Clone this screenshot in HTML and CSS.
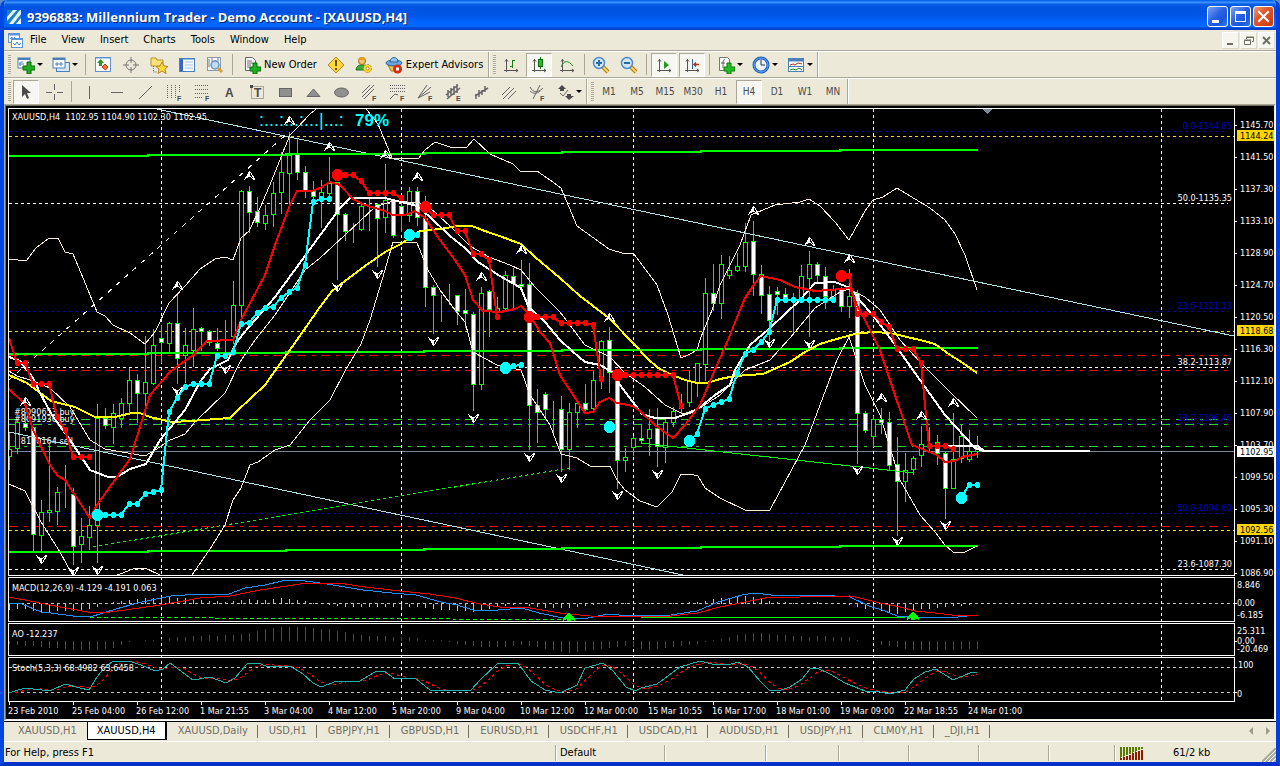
FILE: index.html
```html
<!DOCTYPE html>
<html lang="en">
<head>
    <meta charset="utf-8">
    <title>9396883: Millennium Trader - Demo Account - [XAUUSD,H4]</title>
    <link rel="stylesheet" href="styles.css">
</head>
<body>
<div class="window">
<header class="titlebar">
    <svg class="logo" viewBox="0 0 14 14">
        <rect width="14" height="14" rx="1" fill="#1d7fc0"/>
        <path d="M0 7L6 0H10L0 11zM2 14L13 0H14V4L6 14zM9 14L14 8V14z" fill="#e8f6ff"/>
    </svg>
    <h1>9396883: Millennium Trader - Demo Account - [XAUUSD,H4]</h1>
    <button class="cap" aria-label="Minimize"><svg viewBox="0 0 19 19"><path d="M4 13h7v3H4z" fill="#fff"/></svg></button>
    <button class="cap" aria-label="Maximize"><svg viewBox="0 0 19 19"><path d="M4 4h11v11H4zM5 7v7h9V7z" fill="#fff" fill-rule="evenodd"/></svg></button>
    <button class="cap close" aria-label="Close"><svg viewBox="0 0 19 19"><path d="M5 5l9 9M14 5l-9 9" stroke="#fff" stroke-width="2" stroke-linecap="square"/></svg></button>
</header>

<nav class="menubar">
    <svg class="mdi-icon" viewBox="0 0 15 15">
        <rect x="0.5" y="0.5" width="11" height="9" fill="#fff" stroke="#5b93d6"/>
        <path d="M0 1.5h12" stroke="#5b93d6" stroke-width="2"/>
        <path d="M2 6l2-2 1 2 2-2" fill="none" stroke="#5b93d6"/>
        <rect x="3.5" y="5.5" width="11" height="9" fill="#fff" stroke="#5b93d6"/>
        <path d="M3 6.5h12" stroke="#5b93d6"/>
        <path d="M5 10l2 2 2-3 2 3 2-2" fill="none" stroke="#3c78c8"/>
    </svg>
    <button>File</button>
    <button>View</button>
    <button>Insert</button>
    <button>Charts</button>
    <button>Tools</button>
    <button>Window</button>
    <button>Help</button>
    <span class="spacer"></span>
    <button class="mdi-btn" aria-label="Minimize chart"><svg viewBox="0 0 15 15"><path d="M4 10h6v2H4z" fill="#716f64"/></svg></button>
    <button class="mdi-btn" aria-label="Restore chart"><svg viewBox="0 0 15 15"><path d="M5.5 6V4.5h7v4H11M3.500 7.500h6v4h-6zM3 7h7M5 4h8" fill="none" stroke="#716f64"/></svg></button>
    <button class="mdi-btn" aria-label="Close chart"><svg viewBox="0 0 15 15"><path d="M4 4l7 7M11 4l-7 7" stroke="#716f64" stroke-width="2"/></svg></button>
</nav>

<!-- standard, charts toolbars -->
<div class="toolbars">
<div class="row">
    <div class="bar">
        <span class="grip"></span>
        <button class="drop" aria-label="New chart">
            <svg viewBox="0 0 18 18"><rect x="1" y="2" width="12" height="10" fill="#fff" stroke="#4a80b8"/><path d="M1 3h12" stroke="#4a80b8" stroke-width="2"/><path d="M3 6v4M2 8h5M5 5v2" stroke="#4a80b8"/><path d="M10 6h4v4h4v4h-4v4h-4v-4H6v-4h4z" fill="#1fae1f" stroke="#0a6b0a"/></svg>
            <i></i>
        </button>
        <button class="drop" aria-label="Profiles">
            <svg viewBox="0 0 18 18"><rect x="4.500" y="6.500" width="13" height="9" fill="#d6e8fa" stroke="#4a80b8"/><rect x="1" y="2" width="12" height="10" fill="#fff" stroke="#4a80b8"/><path d="M1 3h12" stroke="#4a80b8" stroke-width="2"/><path d="M3 8h8M5 6v4M9 6v4" stroke="#4a80b8"/></svg>
            <i></i>
        </button>
        <span class="sep"></span>
        <button aria-label="Market Watch"><svg viewBox="0 0 18 18"><rect x="1.500" y="1.500" width="15" height="14" fill="#fff" stroke="#5b93d6"/><path d="M2 2.500h14" stroke="#a8ccf0"/><path d="M6.500 3L10 7H8v3H5V7H3z" fill="#1f9a1f"/><path d="M11.500 14L8 11l2-2 1-1 3 3z" fill="#ee7a3c" stroke="#b03010"/></svg></button>
        <button aria-label="Data Window"><svg viewBox="0 0 18 18"><circle cx="9" cy="9" r="5" fill="none" stroke="#777"/><path d="M9 1v6M9 11v6M1 9h6M11 9h6" stroke="#777"/></svg></button>
        <button aria-label="Navigator"><svg viewBox="0 0 18 18"><path d="M1 2h5l1 2h6v6H1z" fill="#fbe27a" stroke="#b8922a"/><path d="M3.500 10v6h4" stroke="#666" fill="none" stroke-dasharray="1 1"/><path d="M12 6l2 4 4 .5-3 2.500 1 4.500-4-2.500-4 2.500 1-4.500-3-2.500 4-.5z" fill="#ffd83a" stroke="#b8862a"/></svg></button>
        <button aria-label="Terminal"><svg viewBox="0 0 18 18"><rect x="1.500" y="2.500" width="15" height="13" fill="#f4f9ff" stroke="#4a80b8"/><path d="M3.500 3v12" stroke="#3465c8" stroke-width="3"/><path d="M7 6h8M7 9h8M7 12h8" stroke="#a8c4e0"/><path d="M2 3h14" stroke="#4a80b8"/></svg></button>
        <button aria-label="Strategy Tester"><svg viewBox="0 0 18 18"><rect x="1.500" y="1.500" width="13" height="13" fill="#fff" stroke="#8a9aae"/><path d="M3 3v8M6 2v6M9 4v4M12 2v6" stroke="#68788a"/><circle cx="9" cy="9" r="4" fill="#bfdcf6" stroke="#6a93be" stroke-width="1.500"/><path d="M12 12l4 4" stroke="#d8a030" stroke-width="3"/></svg></button>
        <span class="sep"></span>
        <button class="wide"><svg viewBox="0 0 18 18"><path d="M2.500 1.500h7l3 3v10h-10z" fill="#fff" stroke="#666"/><path d="M4 5h5M4 7h6M4 9h4M4 11h3" stroke="#666"/><path d="M10 7h4v4h4v4h-4v3h-4v-3H7v-4h3z" fill="#1fae1f" stroke="#0a6b0a"/></svg>New Order</button>
        <button aria-label="Alerts"><svg viewBox="0 0 18 18"><path d="M9 1l8 8-8 8-8-8z" fill="#ffd83a" stroke="#a8842a"/><path d="M9 4v6M9 12v2" stroke="#6a4a00" stroke-width="2"/></svg></button>
        <button aria-label="MetaEditor"><svg viewBox="0 0 18 18"><path d="M1 14c0-7 12-7 12 0z" fill="#39b039" stroke="#1a751a"/><circle cx="7" cy="5" r="3.500" fill="#f2c46a" stroke="#9a6a1a"/><path d="M3 4c0-4 8-4 8 0z" fill="#e0a020"/><circle cx="12.500" cy="12.500" r="4" fill="#ffd83a" stroke="#b8862a" stroke-dasharray="2 1"/><circle cx="12.500" cy="12.500" r="1.500" fill="#fff" stroke="#b8862a"/></svg></button>
        <button class="wide"><svg viewBox="0 0 18 18"><path d="M3 9h12l-2 6H6z" fill="#f0c050" stroke="#a87a1a"/><ellipse cx="9" cy="7" rx="8" ry="3" fill="#6aa8e2" stroke="#2a64a0"/><path d="M5 6c0-6 8-6 8 0z" fill="#8fc4f2" stroke="#2a64a0"/><circle cx="12.500" cy="13" r="4.500" fill="#d82a10"/><rect x="11" y="11.500" width="3" height="3" fill="#fff"/></svg>Expert Advisors</button>
    </div>
    <div class="bar">
        <span class="grip"></span>
        <button aria-label="Bar chart"><svg viewBox="0 0 18 18"><path d="M4.500 3v13M2 14.500h14M3 5.500l1.500-2L6 5.500M14 13l2 1.500-2 1.500" fill="none" stroke="#555"/><path d="M10.500 4v8M8 10.500h2.500M10.500 4.500H13" stroke="#1a801a" fill="none"/></svg></button>
        <button class="on" aria-label="Candlesticks"><svg viewBox="0 0 18 18"><path d="M4.500 3v13M2 14.500h14M3 5.500l1.500-2L6 5.500M14 13l2 1.500-2 1.500" fill="none" stroke="#555"/><path d="M10.500 1v12" stroke="#0a6b0a"/><rect x="8.500" y="3.500" width="4" height="7" fill="#1fc01f" stroke="#0a6b0a"/></svg></button>
        <button aria-label="Line chart"><svg viewBox="0 0 18 18"><path d="M4.500 3v13M2 14.500h14M3 5.500l1.500-2L6 5.500M14 13l2 1.500-2 1.500" fill="none" stroke="#555"/><path d="M3 11C6 4 10 4 15 10" stroke="#1a901a" fill="none"/></svg></button>
        <span class="sep slim"></span>
        <button aria-label="Zoom in"><svg viewBox="0 0 18 18"><path d="M11 11l5 5" stroke="#a87a1a" stroke-width="4"/><path d="M11 11l5 5" stroke="#f6d860" stroke-width="2"/><circle cx="7" cy="7" r="5.500" fill="#cfe6fa" stroke="#4f8cc8" stroke-width="1.500"/><path d="M4 7h6M7 4v6" stroke="#2a6aa8" stroke-width="2"/></svg></button>
        <button aria-label="Zoom out"><svg viewBox="0 0 18 18"><path d="M11 11l5 5" stroke="#a87a1a" stroke-width="4"/><path d="M11 11l5 5" stroke="#f6d860" stroke-width="2"/><circle cx="7" cy="7" r="5.500" fill="#cfe6fa" stroke="#4f8cc8" stroke-width="1.500"/><path d="M4 7h6" stroke="#2a6aa8" stroke-width="2"/></svg></button>
        <span class="sep"></span>
        <button class="on" aria-label="Auto scroll"><svg viewBox="0 0 18 18"><path d="M4.500 3v13M2 14.500h14M3 5.500l1.500-2L6 5.500M14 13l2 1.500-2 1.500" fill="none" stroke="#555"/><path d="M9 5l5 4-5 4z" fill="#1f9a1f"/></svg></button>
        <button class="on" aria-label="Chart shift"><svg viewBox="0 0 18 18"><path d="M4.500 3v13M2 14.500h14M3 5.500l1.500-2L6 5.500M14 13l2 1.500-2 1.500" fill="none" stroke="#555"/><path d="M9.500 3v10" stroke="#2a64a0"/><path d="M16 8.500h-5M13 6.500l-2 2 2 2" stroke="#b03010" fill="none" stroke-width="1.500"/></svg></button>
        <span class="sep slim"></span>
        <button class="drop" aria-label="Indicators">
            <svg viewBox="0 0 18 18"><path d="M2.500 1.500h8l2 2v11h-10z" fill="#fff" stroke="#777"/><path d="M8 4c-2-1-2 1-2 8M4 7h4" stroke="#555" fill="none"/><path d="M10 7h4v4h4v4h-4v3h-4v-3H7v-4h3z" fill="#1fc01f" stroke="#0a7b0a"/></svg>
            <i></i>
        </button>
        <button class="drop" aria-label="Periods">
            <svg viewBox="0 0 18 18"><circle cx="9" cy="9" r="7" fill="#e8f3ff" stroke="#1c5cc0" stroke-width="3"/><circle cx="9" cy="9" r="7" fill="none" stroke="#6aaaf0"/><path d="M9 4v5h4" stroke="#333" fill="none"/></svg>
            <i></i>
        </button>
        <button class="drop" aria-label="Templates">
            <svg viewBox="0 0 18 18"><rect x="1.500" y="2.500" width="15" height="13" fill="#fff" stroke="#4a80b8"/><path d="M1 4h16" stroke="#4a80b8" stroke-width="3"/><path d="M3 9l3-1 2 1 3-2 4 1" stroke="#b03010" fill="none"/><path d="M2 10.500h14" stroke="#4a80b8"/><path d="M3 14l3-1 3 1 3-2 3 2" stroke="#1a801a" fill="none"/></svg>
            <i></i>
        </button>
    </div>
</div>
<!-- line studies, timeframes -->
<div class="row">
    <div class="bar gray">
        <span class="grip"></span>
        <button class="on" aria-label="Cursor"><svg viewBox="0 0 18 18"><path d="M5 2v12l3-3 2 5 2-1-2-5h4z" fill="#4a4a4a" stroke="none"/></svg></button>
        <button aria-label="Crosshair"><svg viewBox="0 0 18 18"><path d="M9.500 1v6M9.500 11v6M1 9.500h6M12 9.500h6"/></svg></button>
        <span class="sep"></span>
        <button aria-label="Vertical line"><svg viewBox="0 0 18 18"><path d="M9.500 3v13"/></svg></button>
        <button aria-label="Horizontal line"><svg viewBox="0 0 18 18"><path d="M3 9.500h12"/></svg></button>
        <button aria-label="Trendline"><svg viewBox="0 0 18 18"><path d="M3 16L16 3"/></svg></button>
        <button aria-label="Cycle lines"><svg viewBox="0 0 18 18"><path d="M3.500 2v13M7.500 2v13M11.500 2v13M15.500 2v8" stroke-dasharray="1 1"/><text x="13" y="18">F</text></svg></button>
        <button aria-label="Fibonacci retracement"><svg viewBox="0 0 18 18"><path d="M3 2.500h13M3 6.500h13M3 10.500h13M3 14.500h8" stroke-dasharray="1 1"/><text x="13" y="18">F</text></svg></button>
        <button aria-label="Text"><svg viewBox="0 0 18 18"><text class="glyph" x="5" y="14">A</text></svg></button>
        <button aria-label="Text label"><svg viewBox="0 0 18 18"><rect x="3.500" y="3.500" width="12" height="12" fill="none" stroke-dasharray="1 1"/><path d="M2 2h3v3H2z" fill="#4a4a4a" stroke="none"/><text class="glyph" x="6" y="14">T</text></svg></button>
        <button aria-label="Rectangle"><svg viewBox="0 0 18 18"><rect x="3.500" y="5.500" width="12" height="8" fill="#909090"/></svg></button>
        <button aria-label="Triangle"><svg viewBox="0 0 18 18"><path d="M3 13.500L9.500 6 16 13.500z" fill="#909090"/></svg></button>
        <button aria-label="Ellipse"><svg viewBox="0 0 18 18"><ellipse cx="9.500" cy="9.500" rx="7" ry="4.500" fill="#909090"/></svg></button>
        <button aria-label="Fibonacci channel"><svg viewBox="0 0 18 18"><path d="M2 10L10 2M2 14L14 2M4 16L14 6"/><text x="12" y="18">F</text></svg></button>
        <button aria-label="Fibonacci expansion"><svg viewBox="0 0 18 18"><path d="M2 2.500h15M2 5.500h15M2 8.500h15" stroke-dasharray="1 1"/><path d="M2 16l5-5 3 1"/><text x="12" y="18">F</text></svg></button>
        <button aria-label="Fibonacci fan"><svg viewBox="0 0 18 18"><path d="M2 15L11 2M2 15L15 4M2 15L14 9"/><text x="12" y="18">F</text></svg></button>
        <button aria-label="Equidistant channel"><svg viewBox="0 0 18 18"><path d="M2 12L14 2M3 16L16 5M4 7v7M7 5v8M10 3v9M13 1v9" stroke-width="1.500"/><text x="12" y="18">E</text></svg></button>
        <button aria-label="Standard deviation channel"><svg viewBox="0 0 18 18"><path d="M3 13L16 5M4 11v5M7 7v7M10 7v5M13 3v6" stroke-width="1.500"/></svg></button>
        <button aria-label="Parallel lines"><svg viewBox="0 0 18 18"><path d="M2 12L10 4M3 16L14 5M8 16L16 8"/></svg></button>
        <button aria-label="Fibonacci arcs"><svg viewBox="0 0 18 18"><path d="M5 16L12 2M2 4c3 6 8 6 13 1M2 8c3 3 7 3 10 0"/><text x="12" y="18">F</text></svg></button>
        <button class="drop" aria-label="Arrows">
            <svg viewBox="0 0 18 18"><path d="M6 2l4 4H8v2H4V6H2zM13 17l-4-4h2v-2h4v2h3z" fill="#4a4a4a" stroke="none"/><path d="M4 10l3 3 5-6"/></svg>
            <i></i>
        </button>
    </div>
    <div class="bar gray frames">
        <span class="grip"></span>
        <button>M1</button>
        <button>M5</button>
        <button>M15</button>
        <button>M30</button>
        <button>H1</button>
        <button class="on">H4</button>
        <button>D1</button>
        <button>W1</button>
        <button>MN</button>
    </div>
</div>
</div>

<main class="mdi">
<svg id="chart" class="chart" viewBox="6 106 1268 613" role="img" aria-label="XAUUSD, H4 chart">
    <defs>
        <clipPath id="mainPane"><rect x="9" y="109" width="1225" height="466"/></clipPath>
        <g id="fractal">
            <path d="M0.5 -5V0L6 4L1.500 -4" fill="none" stroke="#fff"/>
            <path d="M0 -5L1 -5V0L-5 4L-2 -1Z" fill="#fff"/>
        </g>
        <path id="signal" d="M0 -5L6 2V4L2 2V4H-2V2L-6 4V2Z" fill="#0f0"/>
    </defs>

    <g id="levels" fill="none"></g>
    <g id="orders" class="small">
        <text x="14" y="415">#8090653 buy</text>
        <text x="14" y="422">#8091936 buy</text>
        <text x="14" y="444">#8130164 sell</text>
    </g>
    <g id="plot" fill="none" clip-path="url(#mainPane)"></g>

    <!-- sub-windows: MACD, AO, Stochastic -->
    <g id="macd" fill="none"></g>
    <g id="ao" fill="none"></g>
    <g id="stoch" fill="none"></g>

    <g fill="none" stroke="#fff">
        <rect x="8.500" y="108.500" width="1226" height="467"/>
        <rect x="8.500" y="577.500" width="1226" height="44"/>
        <rect x="8.500" y="623.500" width="1226" height="32"/>
        <rect x="8.500" y="657.500" width="1226" height="44"/>
    </g>
    <g id="ticks" stroke="#fff"></g>
    <path d="M983 109h9l-4.500 5z" fill="#789"/>

    <g class="small">
        <text x="12" y="120" xml:space="preserve">XAUUSD,H4  1102.95 1104.90 1102.30 1102.95</text>
        <text x="12" y="591">MACD(12,26,9) -4.129 -4.191 0.063</text>
        <text x="12" y="637">AO -12.237</text>
        <text x="12" y="671">Stoch(5,3,3) 68.4982 63.6458</text>
    </g>
    <text class="meter" x="259" y="126">:...:...:...|...:</text>
    <text class="percent" x="355" y="126">79%</text>

    <g class="small fib">
        <text class="blue" x="1232" y="129">0.0-1144.85</text>
        <text x="1232" y="201">50.0-1135.35</text>
        <text class="blue" x="1232" y="309">23.6-1121.13</text>
        <text x="1232" y="365">38.2-1113.87</text>
        <text class="blue" x="1232" y="421">38.2-1106.46</text>
        <text class="blue" x="1232" y="511">50.0-1094.60</text>
        <text x="1232" y="567">23.6-1087.30</text>
    </g>

    <g class="small">
        <text x="1240" y="128">1145.70</text>
        <text x="1240" y="160">1141.50</text>
        <text x="1240" y="192">1137.30</text>
        <text x="1240" y="224">1133.10</text>
        <text x="1240" y="256">1128.90</text>
        <text x="1240" y="288">1124.70</text>
        <text x="1240" y="320">1120.50</text>
        <text x="1240" y="352">1116.30</text>
        <text x="1240" y="384">1112.10</text>
        <text x="1240" y="416">1107.90</text>
        <text x="1240" y="448">1103.70</text>
        <text x="1240" y="480">1099.50</text>
        <text x="1240" y="512">1095.30</text>
        <text x="1240" y="544">1091.10</text>
        <text x="1240" y="576">1086.90</text>
        <text x="1237" y="588">8.846</text>
        <text x="1237" y="606">0.00</text>
        <text x="1237" y="618">-6.185</text>
        <text x="1237" y="634">25.311</text>
        <text x="1237" y="644">0.00</text>
        <text x="1237" y="652">-20.469</text>
        <text x="1238" y="668">100</text>
        <text x="1237" y="697">0</text>
    </g>
    <g fill="#ffd700">
        <rect x="1237" y="130" width="37" height="11"/>
        <rect x="1237" y="325" width="37" height="11"/>
        <rect x="1237" y="524" width="37" height="11"/>
        <rect x="1237" y="446" width="37" height="11" fill="#fff"/>
    </g>
    <g class="small dark">
        <text x="1240" y="139">1144.24</text>
        <text x="1240" y="334">1118.68</text>
        <text x="1240" y="455">1102.95</text>
        <text x="1240" y="533">1092.56</text>
    </g>

    <g class="small">
        <text x="8" y="714">23 Feb 2010</text>
        <text x="72" y="714">25 Feb 04:00</text>
        <text x="136" y="714">26 Feb 12:00</text>
        <text x="200" y="714">1 Mar 21:55</text>
        <text x="264" y="714">3 Mar 04:00</text>
        <text x="328" y="714">4 Mar 12:00</text>
        <text x="392" y="714">5 Mar 20:00</text>
        <text x="456" y="714">9 Mar 04:00</text>
        <text x="520" y="714">10 Mar 12:00</text>
        <text x="584" y="714">12 Mar 00:00</text>
        <text x="648" y="714">15 Mar 10:55</text>
        <text x="712" y="714">16 Mar 17:00</text>
        <text x="776" y="714">18 Mar 01:00</text>
        <text x="840" y="714">19 Mar 09:00</text>
        <text x="904" y="714">22 Mar 18:55</text>
        <text x="968" y="714">24 Mar 01:00</text>
    </g>
</svg>
</main>

<nav class="tabs">
    <a href="#">XAUUSD,H1</a>
    <a href="#" class="active">XAUUSD,H4</a>
    <a href="#">XAUUSD,Daily</a>
    <a href="#">USD,H1</a>
    <a href="#">GBPJPY,H1</a>
    <a href="#">GBPUSD,H1</a>
    <a href="#">EURUSD,H1</a>
    <a href="#">USDCHF,H1</a>
    <a href="#">USDCAD,H1</a>
    <a href="#">AUDUSD,H1</a>
    <a href="#">USDJPY,H1</a>
    <a href="#">CLM0Y,H1</a>
    <a href="#">_DJI,H1</a>
    <span class="spacer"></span>
    <button aria-label="Scroll left"><svg viewBox="0 0 4 8"><path d="M4 0v8L0 4z" fill="#9c9a8c"/></svg></button>
    <button aria-label="Scroll right"><svg viewBox="0 0 4 8"><path d="M0 0v8l4-4z" fill="#9c9a8c"/></svg></button>
</nav>

<footer class="status">
    <span class="help">For Help, press F1</span>
    <span class="w110">Default</span>
    <span class="w100"></span>
    <span class="w72"></span>
    <span class="w70"></span>
    <span class="w70"></span>
    <span class="w70"></span>
    <span class="w66"></span>
    <span class="conn">
        <svg viewBox="0 0 24 13">
            <path d="M1 0v13M4 0v13M7 0v13M10 0v13M13 0v13M16 0v13M19 0v13M22 0v13" stroke="#5a7a00" stroke-width="2"/>
            <path d="M0 11L24 1V13H0z" fill="#ece9d8"/>
            <path d="M1 11v2M4 10v3M7 9v4M10 8v5M13 6v7M16 5v8M19 4v9M22 3v10" stroke="#8e1a00" stroke-width="2"/>
        </svg>
        61/2 kb
    </span>
    <svg class="resize" viewBox="0 0 14 14"><path d="M0 14L14 0M4 14L14 4M8 14L14 8M12 14l2-2" stroke="#aca899" stroke-width="2"/><path d="M2 14L14 2M6 14l8-8M10 14l4-4" stroke="#fff"/></svg>
</footer>
</div>
<script src="chart.js"></script>
</body>
</html>
```

FILE: styles.css
```css
* {
    box-sizing: border-box;
}
body {
    margin: 0;
    background: #5b8fd0;
    font: 11px/14px "DejaVu Sans Condensed", "Liberation Sans", sans-serif;
    color: #000;
}
button {
    font: inherit;
    color: inherit;
    background: none;
    border: 0;
    padding: 0;
    margin: 0;
}
.window {
    display: flex;
    flex-direction: column;
    height: 100vh;
    background: #ece9d8;
    border: solid #0831d9;
    border-width: 0 4px 4px;
    border-color: #0046e0 #0040d8 #0031c8 #0046e0;
    border-radius: 7px 7px 0 0;
    overflow: hidden;
}
.spacer {
    flex: 1;
}

/* title bar */
.titlebar {
    display: flex;
    align-items: center;
    height: 30px;
    flex: none;
    margin: 0 -4px;
    padding: 3px 6px 0 7px;
    gap: 2px;
    background: linear-gradient(#0058e6 0, #3a93ff 8%, #0a5fe8 14%, #0053e1 25%, #0055e5 50%, #0066ff 75%, #0066ff 88%, #0048d0 94%, #003dc8 100%);
}
.logo {
    width: 14px;
    height: 14px;
}
.titlebar h1 {
    flex: 1;
    margin: 0;
    padding-left: 4px;
    font: bold 13px/18px "Open Sans", sans-serif;
    color: #fff;
    text-shadow: 1px 1px #0a246a;
    white-space: nowrap;
}
.cap {
    width: 21px;
    height: 21px;
    border: 1px solid #fff;
    border-radius: 3px;
    background: linear-gradient(135deg, #7ba4f4, #2a62e4 45%, #1a55dc 70%, #2a7af0);
}
.cap svg {
    display: block;
}
.cap.close {
    background: linear-gradient(135deg, #e8a078, #e0562a 40%, #d8481a 70%, #c03a10);
}

/* menu */
.menubar {
    display: flex;
    align-items: center;
    flex: none;
    height: 21px;
    padding-left: 4px;
    border-bottom: 1px solid #aca899;
}
.mdi-icon {
    width: 15px;
    height: 15px;
    margin-right: -1px;
}
.menubar button {
    padding: 0 7px 0 8px;
}
.menubar .mdi-btn {
    width: 17px;
    height: 17px;
    padding: 0;
    margin-right: 1px;
    background: #f6f5ee;
    border: 1px solid;
    border-color: #fff #dcd8c8 #dcd8c8 #fff;
}
.mdi-btn svg {
    display: block;
}

/* toolbars */
.toolbars {
    flex: none;
}
.row {
    display: flex;
    height: 26px;
    border-top: 1px solid #fff;
}
.row:first-child {
    height: 27px;
    border-bottom: 1px solid #aca899;
}
.bar {
    display: flex;
    align-items: center;
    padding-left: 4px;
    border-right: 1px solid #aca899;
    box-shadow: 1px 0 #fff;
}
.grip {
    width: 3px;
    height: 20px;
    margin-right: 1px;
    background: repeating-linear-gradient(#aca899 0, #aca899 1px, #f8f7f0 1px, #ece9d8 2px);
}
.sep {
    width: 7px;
    height: 21px;
    background: linear-gradient(#aca899, #aca899) center / 1px 100% no-repeat;
}
.sep.slim {
    width: 6px;
}
.bar button {
    display: flex;
    align-items: center;
    justify-content: center;
    width: 28px;
    height: 24px;
}
.bar svg {
    width: 18px;
    height: 18px;
    flex: none;
}
.bar .on {
    width: 26px;
    margin: 0 1px;
    border: 1px solid;
    border-color: #aca899 #fff #fff #aca899;
    background: #f7f6f0;
}
.bar .drop {
    width: 35px;
    justify-content: flex-start;
    padding-left: 5px;
    gap: 2px;
}
.drop i {
    border: 3px solid transparent;
    border-top-color: #000;
    border-bottom: 0;
}
.bar .wide {
    width: auto;
    padding: 0 5px 0 7px;
    gap: 3px;
    white-space: nowrap;
}
.gray svg {
    fill: none;
    stroke: #666;
}
.gray text {
    font: bold 7px "Liberation Sans", sans-serif;
    fill: #4a4a4a;
    stroke: none;
}
.gray text.glyph {
    font-size: 12px;
}
.frames {
    color: #4a4a4a;
    font-size: 10px;
}

/* chart window */
.mdi {
    flex: 1;
    min-height: 0;
    border: 1px solid;
    border-color: #aca899 #fff #fff #aca899;
}
.chart {
    display: block;
    width: 100%;
    height: 100%;
    background: #000;
    border: 1px solid;
    border-color: #716f64 #f1efe2 #f1efe2 #716f64;
    shape-rendering: crispEdges;
}
.small text {
    font: 9px "DejaVu Sans Condensed", "Liberation Sans", sans-serif;
    fill: #fff;
}
.fib text {
    text-anchor: end;
}
.fib .blue {
    fill: #0000cd;
}
.dark text {
    fill: #000;
}
.meter {
    font: 18px "Liberation Sans", sans-serif;
    fill: #0ff;
}
.percent {
    font: bold 17px "Liberation Sans", sans-serif;
    fill: #0ff;
}

/* chart tabs */
.tabs {
    display: flex;
    align-items: flex-start;
    flex: none;
    height: 20px;
    padding-left: 4px;
    border-top: 1px solid #000;
}
.tabs a {
    height: 18px;
    line-height: 17px;
    padding: 0 10px 0 11px;
    color: #716f64;
    text-decoration: none;
    white-space: nowrap;
    background: linear-gradient(#716f64, #716f64) right 3px / 1px 13px no-repeat;
}
.tabs a:first-child {
    background: none;
    padding-left: 10px;
}
.tabs a.active {
    color: #000;
    background: #fff;
    border: solid #000;
    border-width: 0 2px 1px 1px;
    padding: 0 9px;
}
.tabs button {
    width: 17px;
    height: 18px;
}
.tabs button svg {
    display: block;
    width: 4px;
    height: 8px;
    margin: 0 auto;
}

/* status bar */
.status {
    display: flex;
    flex: none;
    height: 21px;
    border-top: 1px solid #fff;
}
.status span {
    margin: 3px 0 1px;
    padding-left: 4px;
    line-height: 16px;
    border-left: 1px solid #aca899;
    box-shadow: inset 1px 0 #fff;
}
.status .help {
    flex: 1;
    padding-left: 1px;
    border: 0;
    box-shadow: none;
}
.w110 { width: 109px; }
.w100 { width: 101px; }
.w72 { width: 73px; }
.w70 { width: 70px; }
.w66 { width: 66px; }
.status .conn {
    display: flex;
    align-items: center;
    gap: 29px;
    width: 148px;
    padding-left: 5px;
    white-space: nowrap;
}
.conn svg {
    width: 24px;
    height: 13px;
    shape-rendering: crispEdges;
}
.resize {
    width: 14px;
    height: 14px;
    align-self: flex-end;
}
```

FILE: chart.js
```js
(function(){
    var NS = "http://www.w3.org/2000/svg",
        STEP = 8, X0 = 9;

    function add(parent, name, attrs) {
        var el = document.createElementNS(NS, name);
        for (var a in attrs) el.setAttribute(a, attrs[a]);
        document.getElementById(parent).appendChild(el);
        return el;
    }
    function line(parent, points, color, width, dash) {
        add(parent, "polyline", {
            points: points, stroke: color,
            "stroke-width": width || 1,
            "stroke-dasharray": dash || "none"
        });
    }
    function hline(y, color, dash, end) {
        add("levels", "path", {
            d: "M9 " + (y + 0.5) + "H" + (end || 1228),
            stroke: color, "stroke-dasharray": dash || "none"
        });
    }
    // value of a polyline at every bar
    function sample(points) {
        var p = points.split(" ").map(function(s) { return s.split(",").map(Number); }),
            out = [], j = 0;
        for (var x = X0; x <= 977; x += STEP) {
            while (j < p.length - 2 && p[j+1][0] < x) j++;
            var t = (x - p[j][0]) / (p[j+1][0] - p[j][0]);
            out.push(p[j][1] + t * (p[j+1][1] - p[j][1]));
        }
        return out;
    }

    // horizontal levels and period separators
    [419, 424, 446].forEach(function(y) { hline(y, "#32cd32", "9 6 3 6"); });
    [355, 370, 526].forEach(function(y) { hline(y, "#f00", "9 6 3 6"); });
    [131, 311, 423, 513].forEach(function(y) { hline(y, "#0000cd", "3 3"); });
    [136, 331, 530].forEach(function(y) { hline(y, "#ffd700", "3 3", 1234); });
    [203, 367, 569].forEach(function(y) { hline(y, "#fff", "3 3"); });
    hline(451, "#778899", "", 1234);
    [603, 667, 692].forEach(function(y) { hline(y, "#c0c0c0", "3 3", 1234); });
    [161, 401, 633, 873, 1161].forEach(function(x) {
        add("levels", "path", { d: "M" + (x + 0.5) + " 109V700", stroke: "#fff", "stroke-dasharray": "3 3" });
    });

    // bars: high, open, close, low
    var bars = [
        [433,456,449,469],[420,448,422,453],[412,423,427,430],[427,427,534,551],[500,535,512,551],
        [442,512,510,521],[487,511,492,524],[465,493,493,507],[488,494,546,564],[518,544,536,562],
        [506,537,525,549],[404,525,418,562],[408,418,425,428],[404,427,413,443],[398,418,403,427],
        [368,403,380,413],[374,380,393,422],[336,393,382,413],[329,383,345,384],[325,338,342,362],
        [322,343,323,352],[294,323,358,383],[328,355,345,382],[308,350,329,366],[327,328,331,350],
        [330,331,342,345],[328,343,348,350],[320,347,347,353],[281,336,305,343],[190,305,191,317],
        [186,191,212,232],[197,211,222,226],[205,223,215,229],[182,214,193,226],[152,192,172,213],
        [132,173,155,206],[139,154,172,179],[166,172,190,197],[181,191,196,203],[180,197,192,227],
        [157,193,183,200],[182,182,214,279],[213,214,231,240],[223,229,229,242],[204,229,206,230],
        [198,204,204,230],[203,204,218,266],[164,217,200,232],[199,200,235,237],[198,206,215,231],
        [187,215,191,221],[187,191,217,225],[196,218,287,306],[285,287,295,333],[295,296,296,321],
        [284,296,296,304],[295,295,311,324],[289,310,313,327],[312,314,384,410],[287,384,293,389],
        [290,291,309,336],[297,311,308,312],[271,308,275,310],[268,276,283,307],[260,284,286,289],
        [263,284,405,449],[389,405,412,442],[392,394,409,419],[401,409,409,434],[396,409,449,471],
        [403,449,412,469],[401,412,403,427],[384,403,409,410],[371,408,380,409],[340,376,341,388],
        [327,340,372,392],[370,372,460,488],[448,460,457,471],[436,447,438,455],[425,438,440,443],
        [409,438,429,455],[408,428,446,466],[419,447,422,462],[407,422,411,426],[394,408,405,412],
        [371,402,381,406],[363,382,363,396],[278,364,293,380],[264,293,303,310],[255,303,264,318],
        [256,275,270,278],[253,270,266,271],[223,266,242,271],[221,241,274,295],[265,274,295,313],
        [286,294,320,340],[287,291,294,314],[288,294,297,300],[293,299,299,334],[265,297,276,301],
        [251,278,264,336],[262,264,275,281],[267,276,296,308],[285,297,289,300],[287,289,306,311],
        [269,306,296,317],[290,293,413,463],[411,413,430,432],[416,436,419,446],[408,419,422,433],
        [412,422,465,469],[437,464,481,535],[453,481,470,501],[456,469,458,474],[426,455,444,466],
        [427,446,446,450],[435,442,453,464],[452,453,488,518],[413,488,459,488],[424,458,436,462],
        [430,459,451,461],[436,451,448,457]
    ];
    bars.forEach(function(b, i) {
        var x = X0 + i * STEP,
            top = Math.min(b[1], b[2]), h = Math.abs(b[1] - b[2]);
        add("plot", "rect", { x: x, y: b[0], width: 1, height: b[3] - b[0] + 1, fill: "#0f0" });
        add("plot", "rect", {
            x: x - 1.5, y: top + 0.5, width: 4, height: h,
            fill: b[2] > b[1] ? "#fff" : "#000", stroke: "#0f0"
        });
    });

    // trend lines
    line("plot", "152,108 1234,336", "#b0e0e6");
    line("plot", "9,432 683,575", "#b0e0e6");
    line("plot", "9,380 289,132", "#fff", 1, "5 6");
    line("plot", "93,547 569,468", "#0f0", 1, "3 3");
    line("plot", "641,443 905,472 913,473", "#0f0");
    [156, 354, 552].forEach(function(y) {
        var d = "M9 " + y;
        [148, 286, 424, 562, 701, 840, 978].forEach(function(x, i) {
            d += "H" + x + (i < 6 ? "V" + (y - i - 1) : "");
        });
        add("plot", "path", { d: d, stroke: "#0f0", "stroke-width": 2 });
    });

    // Bollinger bands
    line("plot", "9,259 26,261 36,248 48,239 58,238 65,252 73,254 81,273 97,312 105,316 113,325 130,333 145,344 155,332 169,303 185,286 200,269 215,259 225,257 233,260 241,238 249,231 260,208 272,180 283,152 290,135 297,128 310,114 320,106 363,106 367,110 378,124 392,158 418,159 425,150 435,142 450,147 466,148 474,139 490,154 513,164 521,172 537,171 550,180 561,188 577,226 609,249 625,254 633,253 640,262 657,285 668,315 681,358 690,354 697,350 701,337 712,310 720,285 740,245 751,215 775,205 800,202 809,199 820,206 835,222 849,240 865,211 873,200 883,197 897,188 910,196 930,208 945,220 955,234 965,255 977,290", "#faebd7");
    line("plot", "9,371 17,376 30,380 50,388 70,407 90,440 105,449 145,456 160,447 168,441 185,434 195,422 225,393 240,362 255,340 275,315 305,270 320,258 345,235 375,207 393,201 420,203 430,208 450,226 470,246 489,257 510,265 521,270 535,287 560,312 585,345 610,357 625,373 645,387 665,405 683,414 700,408 720,395 745,370 770,360 790,338 815,308 840,292 849,289 865,297 880,310 900,340 920,362 950,392 977,418", "#faebd7");
    line("plot", "9,484 25,491 41,522 60,552 73,576 115,576 133,569 145,568 160,575 192,575 210,549 225,525 233,500 241,488 250,465 258,462 275,450 290,445 310,420 330,400 345,371 361,344 370,320 385,270 393,242 417,243 428,270 440,290 455,310 465,322 473,352 497,365 521,370 530,395 550,425 561,454 577,458 590,466 610,466 617,480 625,490 640,501 657,507 672,492 681,474 690,474 698,476 705,488 720,498 745,510 760,511 770,510 785,482 805,445 820,405 837,360 849,337 855,355 865,385 880,415 900,480 920,515 935,532 945,545 953,552 963,553 977,546", "#faebd7");

    // moving averages
    line("plot", "9,375 27,383 51,401 63,404 75,407 95,417 115,417 132,413 140,413 150,417 172,422 190,421 230,418 236,412 265,385 297,340 320,307 332,291 345,281 365,266 385,252 401,244 420,231 440,229 458,226 472,226 485,231 505,238 521,244 535,257 560,278 580,296 609,318 633,343 647,358 658,368 670,374 685,380 697,383 707,383 720,379 735,376 763,374 790,362 805,352 820,344 833,340 855,334 873,332 890,333 920,340 935,344 950,355 960,361 977,373", "#ff0", 2);
    line("plot", "9,357 20,361 33,378 41,395 52,415 70,440 90,470 108,477 117,477 130,469 146,464 160,440 185,410 200,382 210,369 228,360 235,345 243,334 275,297 313,245 340,208 350,198 385,198 401,202 417,206 430,217 450,236 465,248 478,262 500,276 521,288 528,306 545,322 560,340 572,351 585,362 600,365 612,372 620,385 642,414 655,418 675,418 695,411 715,395 730,385 735,370 750,345 770,328 800,300 815,283 835,282 850,288 857,297 875,318 893,342 920,380 945,415 975,448 984,451 1090,451", "#fff", 2);
    line("plot", "929,446 978,446 984,451", "#fff", 2);
    line("plot", "9,389 25,404 33,430 50,465 58,476 65,480 90,518 97,505 130,459 150,395 170,372 193,355 207,341 233,340 241,320 265,275 275,245 290,205 297,191 312,191 320,188 330,182 340,185 353,199 365,205 385,211 393,215 405,215 415,211 425,218 440,240 455,260 465,275 473,300 483,311 500,312 515,309 521,306 530,315 540,332 550,343 560,375 585,413 593,412 600,402 609,398 617,403 633,406 640,411 655,425 673,438 685,425 700,405 717,365 728,340 740,310 745,298 755,283 761,276 780,280 795,287 815,291 830,290 850,288 857,305 865,320 880,350 895,395 912,445 937,455 945,462 955,461 962,457 977,454", "#f00", 2);

    // trailing stops: first x, then a y for each bar; the big dot marks the switch
    function stops(x, ys, color, lead) {
        var pts = ys.map(function(y, i) { return (x + i * STEP) + "," + y; });
        line("plot", (lead ? lead + " " : "") + pts.join(" "), color, 2);
        ys.forEach(function(y, i) {
            add("plot", "circle", { cx: x + i * STEP + 0.5, cy: y, r: (i || lead) ? 3 : 6, fill: color });
        });
    }
    stops(17, [363,363,384,384,384,417,430,457,457,457], "#f00", "9,338");
    stops(337, [175,175,175,181,193,193,193,193,198], "#f00");
    stops(425, [207,215,215,215,231,231,254,254,260,317], "#f00");
    stops(529, [317,317,317,317,323,323,323,323,325,379], "#f00");
    stops(617, [375,375,375,375,375,375,375,375,406], "#f00");
    stops(841, [276,276,314,314,314,322,327,349,349,349,363,446,446,446,449], "#f00");
    stops(97, [515,515,515,515,504,504,494,492,490,412,398,387,384,384,384,356,356,352,324,323,313,308,307,298,292,288,265,202,199,199], "#0ff");
    stops(409, [235,235], "#0ff");
    stops(505, [368,366,365], "#0ff");
    stops(609, [427], "#0ff");
    stops(689, [441,434,409,405,402,399,373,354,350,342,332,300,300,300,300,300,300,300,300], "#0ff");
    stops(961, [498,485,485], "#0ff");

    // fractals
    [[25,402],[177,286],[249,176],[289,121],[329,147],[385,155],[417,177],[481,277],[521,250],
     [609,318],[753,211],[809,242],[849,259],[881,398],[921,416],[953,403]].forEach(function(p) {
        add("plot", "use", { href: "#fractal", transform: "translate(" + p + ")" });
    });
    [[41,559],[73,571],[97,570],[177,391],[225,369],[337,287],[377,274],[433,341],[473,418],[529,457],
     [561,478],[617,495],[657,474],[769,343],[809,344],[857,470],[897,541],[945,525]].forEach(function(p) {
        add("plot", "use", { href: "#fractal", transform: "translate(" + p + ") scale(1 -1)" });
    });

    // MACD
    var macd = "9,603 22,604 41,612 51,613 73,616 90,617 116,609 137,603 171,596 200,594 229,594 245,588 265,585 282,581 298,580 327,584 363,590 392,593 416,595 441,602 457,605 473,610 498,610 522,608 539,613 563,618 588,618 608,614 629,616 671,615 697,611 718,602 742,595 754,593 771,595 795,596 820,595 850,597 869,606 885,611 897,616 909,617 958,617 967,616 977,615",
        signal = "9,597 35,602 60,607 88,612 110,612 125,610 160,605 200,598 230,596 260,590 300,584 325,583 345,584 365,587 400,591 430,594 455,598 480,604 500,607 530,608 560,613 590,616 640,617 671,616 697,613 720,607 745,602 765,598 800,597 850,596 860,598 880,603 900,607 915,611 935,613 952,615 977,615",
        m = sample(macd), s = sample(signal);
    m.forEach(function(v, i) {
        var h = Math.round(s[i] - v);
        if (h) add("macd", "path", { d: "M" + (X0 + i * STEP + 0.5) + " 603.500v" + (-h), stroke: "#c0c0c0" });
    });
    line("macd", "90,617.5 213,617.5 213,618.5 453,618.5 453,619.5 565,619.5", "#0f0", 1, "4 3");
    line("macd", "641,617.5 905,617.5", "#0f0");
    line("macd", macd, "#1e90ff");
    line("macd", signal, "#f00");
    add("macd", "use", { href: "#signal", transform: "translate(569 617)" });
    add("macd", "use", { href: "#signal", transform: "translate(913 616)" });

    // Awesome Oscillator: green when rising, red when falling
    var ao = [-3,-4,-5,-5.1,-6,-7,-7.1,-8,-9,-8.9,-9,-8.8,-8,-7,-4,-1,0,0.5,1,2,3,4,4.1,5,5.1,5.5,5,6,6.1,6.5,
              8,10,12,13,14,14.1,14.2,14,13,12,11.5,10,9,7,6,5,4.8,4.6,4,3.6,3.5,3,1,0.8,0.5,-1,-3,-4,-5,-6,-6.1,-6.5,-6,
              -5,-4.5,-5,-6,-8,-9,-11,-12,-11,-10,-9,-8,-7,-6,-5,-6,-8,-9,-8,-7,-6,-5,-4,-3,-1,0.5,2,4,6,7,8,
              7.9,7,6,5.5,5,4.5,4,5,4.5,4.2,4.1,4,1,0,-1,-4,-5,-6,-8,-9,-9.5,-10,-9.9,-9.5,-9,-8.5,-8.2,-8];
    ao.forEach(function(v, i) {
        var up = i > 0 && v > ao[i-1];
        add("ao", "path", { d: "M" + (X0 + i * STEP + 0.5) + " 641v" + (-Math.round(v)), stroke: up ? "#008000" : "#f00" });
    });

    // Stochastic, signal is the 3-bar average
    var k = "9,693 15,691 25,688 50,691 65,684 80,688 89,690 97,677 104,668 113,661 129,661 141,665 155,671 163,669 170,663 193,680 210,677 226,683 235,678 247,664 258,663 266,666 290,666 303,674 313,683 321,687 337,681 358,682 375,672 384,671 395,679 415,678 430,690 470,691 481,679 497,664 518,663 531,681 545,690 560,693 577,685 585,668 603,663 613,671 626,687 635,691 641,688 657,684 680,667 700,661 712,664 728,665 738,662 748,667 760,681 769,690 778,691 790,687 802,679 810,669 817,668 830,674 845,683 865,691 880,692 890,694 905,690 914,679 925,672 936,669 953,680 970,673 977,672",
        kv = sample(k);
    line("stoch", kv.map(function(v, i) {
        var avg = (v + kv[Math.max(i-1, 0)] + kv[Math.max(i-2, 0)]) / 3;
        return (X0 + i * STEP) + "," + avg.toFixed(1);
    }).join(" "), "#f00", 1, "3 3");
    line("stoch", k, "#20b2aa");

    // axis ticks
    for (var y = 125; y <= 573; y += 32)
        add("ticks", "path", { d: "M1235 " + (y + 0.5) + "h2" });
    for (var x = X0; x <= 969; x += 64)
        add("ticks", "path", { d: "M" + (x + 0.5) + " 702v3" });
    [603, 641, 667, 692].forEach(function(y) {
        add("ticks", "path", { d: "M1235 " + (y + 0.5) + "h2" });
    });
})()
```
